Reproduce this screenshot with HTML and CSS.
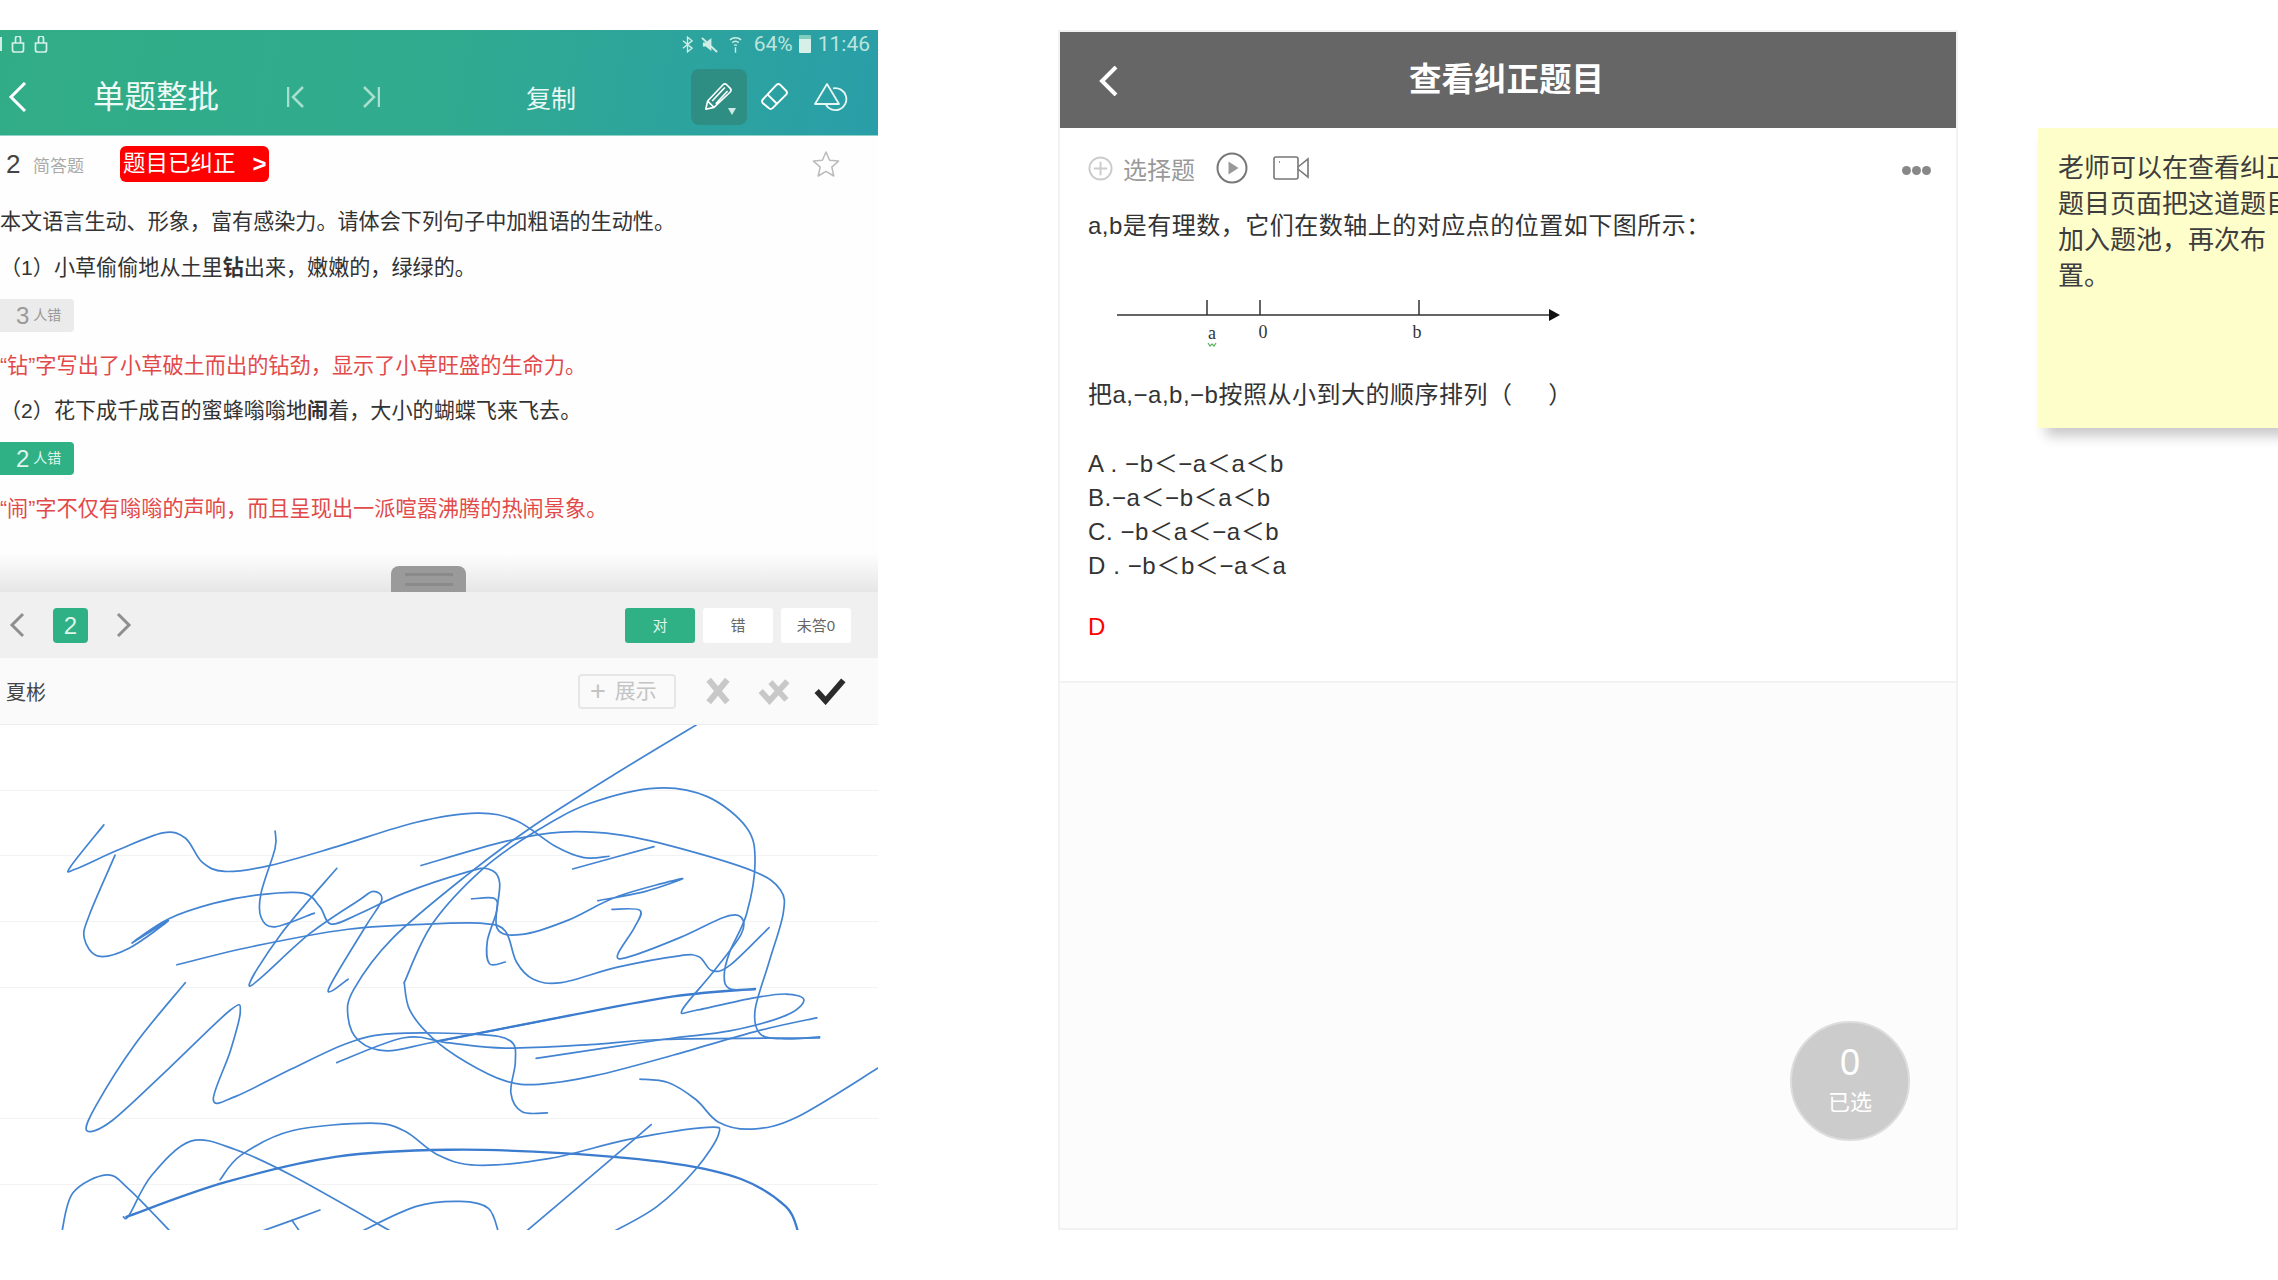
FILE: index.html
```html
<!DOCTYPE html>
<html lang="zh-CN">
<head>
<meta charset="utf-8">
<title>查看纠正题目</title>
<link rel="stylesheet" href="styles.css">
</head>
<body>
<main class="page">
  <section class="phone">
    <header class="app-head">
      <div class="status">
        <div class="status-left">
          <span class="st-bar"></span>
          <svg class="st-lock" viewBox="0 0 14 17"><path d="M1.500 7h11v7a2 2 0 0 1-2 2h-7a2 2 0 0 1-2-2zM4.500 7V2.500a2.500 2.500 0 0 1 5 0V7"/></svg>
          <svg class="st-lock" viewBox="0 0 14 17"><path d="M1.500 7h11v7a2 2 0 0 1-2 2h-7a2 2 0 0 1-2-2zM4.500 7V2.500a2.500 2.500 0 0 1 5 0V7"/></svg>
        </div>
        <div class="status-right">
          <svg class="st-bt" viewBox="0 0 12 18"><path d="M1 5l10 8-5 4V1l5 4-10 8"/></svg>
          <svg class="st-mute" viewBox="0 0 18 18"><path d="M2 7h3l6-5v14l-6-5H2z" class="fill"/><path d="M1 2l16 15"/></svg>
          <svg class="st-wifi" viewBox="0 0 14 20"><path d="M1 5a9 9 0 0 1 12 0M3.500 8a5.500 5.500 0 0 1 7 0M5.500 11a2.500 2.500 0 0 1 3 0M7 13v6"/></svg>
          <span class="st-pct">64%</span>
          <span class="st-bat"></span>
          <span class="st-time">11:46</span>
        </div>
      </div>
      <div class="toolbar">
        <svg class="tb-back" viewBox="0 0 19 30"><path d="M17 1L3 15l14 14"/></svg>
        <h1 class="tb-title">单题整批</h1>
        <svg class="tb-first" viewBox="0 0 18 24"><path d="M1 2v20M16 2L6 12l10 10"/></svg>
        <svg class="tb-last" viewBox="0 0 18 24"><path d="M17 2v20M2 2l10 10L2 22"/></svg>
        <span class="tb-copy">复制</span>
        <span class="tb-active">
          <svg class="tb-pen" viewBox="0 0 32 32"><path d="M2 30l2-9L21 3a3 3 0 0 1 4 0l4 4a3 3 0 0 1 0 4L11 28zM4 21l7 7M9 21L23 6M13 24L26 10"/></svg>
          <span class="tb-caret"></span>
        </span>
        <svg class="tb-eraser" viewBox="0 0 30 30"><path d="M3 18L17 3a3 3 0 0 1 4 0l6 6a3 3 0 0 1 0 4L13 27a3 3 0 0 1-4 0l-6-5a3 3 0 0 1 0-4zM8 13l10 10"/></svg>
        <svg class="tb-shape" viewBox="0 0 34 30"><path d="M13 2L25 22H1z"/><path d="M19 6.400A11 11 0 1 1 11.500 22"/></svg>
      </div>
    </header>

    <div class="question">
      <div class="meta">
        <span class="meta-no">2</span>
        <span class="meta-type">简答题</span>
        <span class="fixed-tag">题目已纠正<i class="fixed-arrow">&gt;</i></span>
        <svg class="star" viewBox="0 0 28 28"><path d="M14 2l3.600 8.300 8.900.8-6.700 6 2 8.900L14 21.300 6.200 26l2-8.900-6.700-6 8.900-.8z"/></svg>
      </div>
      <p class="q-line q-first">本文语言生动、形象，富有感染力。请体会下列句子中加粗语的生动性。</p>
      <p class="q-line">（1）小草偷偷地从土里<b>钻</b>出来，嫩嫩的，绿绿的。</p>
      <span class="pill pill-grey"><em>3</em>人错</span>
      <p class="q-line q-red">“钻”字写出了小草破土而出的钻劲，显示了小草旺盛的生命力。</p>
      <p class="q-line q-first">（2）花下成千成百的蜜蜂嗡嗡地<b>闹</b>着，大小的蝴蝶飞来飞去。</p>
      <span class="pill pill-green pill-second"><em>2</em>人错</span>
      <p class="q-line q-red">“闹”字不仅有嗡嗡的声响，而且呈现出一派喧嚣沸腾的热闹景象。</p>
    </div>

    <div class="handle-band"><div class="handle"><span></span><span></span></div></div>

    <div class="pager">
      <svg class="pg-chev pg-prev" viewBox="0 0 18 26"><path d="M15 2L4 13l11 11"/></svg>
      <span class="pg-no">2</span>
      <svg class="pg-chev pg-next" viewBox="0 0 18 26"><path d="M3 2l11 11L3 24"/></svg>
      <div class="pg-btns">
        <span class="pg-btn pg-on">对</span>
        <span class="pg-btn">错</span>
        <span class="pg-btn">未答0</span>
      </div>
    </div>

    <div class="student">
      <span class="st-name">夏彬</span>
      <span class="st-show"><i>+</i>展示</span>
      <svg class="mark mark-first" viewBox="0 0 30 30"><path class="mark-grey" d="M5 3l20 24M25 3L5 27"/></svg>
      <svg class="mark" viewBox="0 0 36 30"><path class="mark-grey" d="M3 15l10 11L33 4M14 5l18 20"/></svg>
      <svg class="mark" viewBox="0 0 36 30"><path class="mark-dark" d="M3 15l10 11L33 3"/></svg>
    </div>

    <div class="paper">
      <svg id="ink" class="ink" viewBox="0 72 1564 1466" preserveAspectRatio="none"></svg>
    </div>
  </section>

  <section class="panel">
    <header class="panel-head">
      <svg class="ph-back" viewBox="0 0 20 30"><path d="M18 1L4 15l14 14"/></svg>
      <h2 class="ph-title">查看纠正题目</h2>
    </header>
    <div class="panel-body">
      <div class="tools">
        <svg class="t-plus" viewBox="0 0 26 26"><circle cx="13" cy="13" r="11.500"/><path d="M13 6v14M6 13h14"/></svg>
        <span class="t-type">选择题</span>
        <svg class="t-play" viewBox="0 0 32 32"><circle cx="16" cy="16" r="14.500"/><path class="t-fill" d="M12.500 9.500l10 6.500-10 6.500z"/></svg>
        <svg class="t-cam" viewBox="0 0 37 26"><rect x="1" y="2" width="24" height="22" rx="2"/><path d="M25 12l10-8v18l-10-8M6 7h1"/></svg>
        <span class="t-dots"><i></i><i></i><i></i></span>
      </div>
      <p class="stem stem-first">a,b是有理数，它们在数轴上的对应点的位置如下图所示：</p>
      <svg class="axis" viewBox="0 0 480 135">
        <path class="axis-line" d="M29 72H462M119 57v15M172 57v15M331 57v15"/>
        <path class="axis-head" d="M461 66l11 6-11 6z"/>
        <text class="axis-label" x="124" y="96" text-anchor="middle">a</text>
        <text class="axis-label" x="175" y="95" text-anchor="middle">0</text>
        <text class="axis-label" x="329" y="95" text-anchor="middle">b</text>
        <path class="axis-wave" d="M120 100l2 3 2-2 2 2 2-3"/>
      </svg>
      <p class="stem">把a,−a,b,−b按照从小到大的顺序排列（&nbsp;&nbsp;&nbsp;&nbsp;&nbsp;）</p>
      <ul class="options">
        <li>A . −b＜−a＜a＜b</li>
        <li>B.−a＜−b＜a＜b</li>
        <li>C. −b＜a＜−a＜b</li>
        <li>D . −b＜b＜−a＜a</li>
      </ul>
      <p class="answer">D</p>
    </div>
    <div class="panel-rest">
      <div class="chosen"><span class="chosen-no">0</span><span class="chosen-label">已选</span></div>
    </div>
  </section>

  <aside class="note">老师可以在查看纠正<br>题目页面把这道题目<br>加入题池，再次布<br>置。</aside>
</main>
<script src="app.js"></script>
</body>
</html>
```

FILE: styles.css
```css
* { box-sizing: border-box; }
html, body { margin: 0; height: 100%; background: #fff; overflow: hidden; }
body { font-family: "Liberation Sans", "Noto Sans CJK SC", sans-serif; color: #333; }
h1, h2, p, ul { margin: 0; padding: 0; font-weight: 400; }
ul { list-style: none; }
svg { display: block; flex: none; fill: none; }
i, em { font-style: normal; }

.page { display: flex; align-items: flex-start; padding-top: 30px; width: 2278px; }

/* left phone */
.phone { width: 878px; height: 1200px; flex: none; display: flex; flex-direction: column; overflow: hidden; background: #fff; }
.app-head { height: 106px; flex: none; background: linear-gradient(100deg, #31ad86 0%, #30ab8f 50%, #2ca39f 80%, #2a9ea8 100%); border-bottom: 1px solid #8fd3c9; color: #fff; }
.status { height: 28px; display: flex; justify-content: space-between; align-items: center; padding: 0 8px 0 0; }
.status-left { display: flex; align-items: center; gap: 9px; }
.st-bar { width: 2px; height: 14px; background: #cfeee6; }
.st-lock { width: 14px; height: 17px; stroke: #d6f1ea; stroke-width: 1.700; }
.status-right { display: flex; align-items: center; color: #bde5dd; font-family: Roboto, "Liberation Sans", sans-serif; font-size: 21px; }
.st-bt { width: 11px; height: 17px; stroke: #cfeee6; stroke-width: 1.500; }
.st-mute { width: 17px; height: 17px; margin-left: 8px; stroke: #cfeee6; stroke-width: 2; }
.st-mute .fill { fill: #cfeee6; stroke: none; }
.st-wifi { width: 13px; height: 19px; margin-left: 11px; stroke: #cfeee6; stroke-width: 1.500; }
.st-pct { margin-left: 12px; }
.st-bat { width: 12px; height: 18px; margin-left: 6px; background: linear-gradient(#7fcdbf 22%, #d6efe9 22%); border-radius: 1px; }
.st-time { margin-left: 7px; }

.toolbar { height: 77px; display: flex; align-items: center; }
.tb-back { width: 19px; height: 30px; margin-left: 8px; stroke: #fff; stroke-width: 3; }
.tb-title { margin-left: 66px; font-size: 31.500px; line-height: 40px; color: #eefaf6; width: 126px; white-space: nowrap; }
.tb-first, .tb-last { width: 18px; height: 24px; stroke: #a9dfcf; stroke-width: 2.500; }
.tb-first { margin-left: 68px; }
.tb-last { margin-left: 57px; }
.tb-copy { margin-left: 146px; font-size: 25px; width: 50px; color: #eaf8f4; white-space: nowrap; }
.tb-active { margin-left: 115px; width: 56px; height: 56px; border-radius: 8px; background: #2f8e83; position: relative; display: flex; align-items: center; justify-content: center; }
.tb-pen { width: 29px; height: 29px; stroke: #fff; stroke-width: 1.800; margin: 0 0 0 -1px; stroke-linejoin: round; }
.tb-caret { position: absolute; left: 37px; top: 39px; border: 4px solid transparent; border-top: 7px solid #cfe9e4; border-bottom: 0; }
.tb-eraser { width: 29px; height: 29px; margin-left: 13px; stroke: #fff; stroke-width: 2; stroke-linejoin: round; }
.tb-shape { width: 34px; height: 30px; margin-left: 25px; stroke: #e8f6f4; stroke-width: 1.800; stroke-linejoin: round; }

.question { height: 417px; flex: none; background: #fefefe; display: flex; flex-direction: column; align-items: flex-start; }
.meta { height: 64px; width: 100%; display: flex; align-items: center; padding-bottom: 8px; flex: none; }
.meta-no { margin-left: 6px; font-size: 26px; width: 15px; color: #444; }
.meta-type { margin-left: 12px; font-size: 17px; color: #aaa; width: 52px; white-space: nowrap; }
.fixed-tag { margin-left: 35px; width: 149px; height: 36px; background: #f00; color: #fff; border-radius: 6px; font-size: 22.500px; line-height: 36px; padding-left: 3px; display: flex; white-space: nowrap; }
.fixed-arrow { margin-left: 17px; font-size: 24px; font-weight: 700; }
.star { width: 28px; height: 28px; margin-left: 543px; stroke: #bbb; stroke-width: 1.500; stroke-linejoin: round; }
.q-line { height: 45px; line-height: 45px; font-size: 21.100px; color: #333; white-space: nowrap; flex: none; }
.q-first { line-height: 43px; }
.q-line b { font-weight: 700; }
.q-red { color: #e24a4a; margin-top: 12px; font-size: 21.200px; line-height: 43px; }
.pill { margin-top: 9px; width: 74px; height: 33px; border-radius: 0 4px 4px 0; display: flex; align-items: center; padding-left: 16px; font-size: 14px; line-height: 33px; flex: none; }
.pill em { font-size: 24px; margin-right: 4px; }
.pill-grey { background: #ebebeb; color: #999; }
.pill-green { background: #30b185; color: #dff5ec; }
.pill-second { margin-top: 8px; }

.handle-band { height: 39px; flex: none; background: linear-gradient(#fefefe, #e6e6e6); display: flex; justify-content: center; align-items: flex-end; padding-right: 21px; }
.handle { width: 75px; height: 26px; background: #9a9a9a; border-radius: 8px 8px 0 0; display: flex; flex-direction: column; align-items: center; justify-content: center; gap: 7px; padding-top: 1px; }
.handle span { width: 48px; height: 3px; background: #8a8a8a; }

.pager { height: 66px; flex: none; background: #f0f0f0; display: flex; align-items: center; }
.pg-chev { width: 18px; height: 26px; stroke: #8f8f8f; stroke-width: 3; }
.pg-prev { margin-left: 8px; }
.pg-no { margin-left: 27px; width: 35px; height: 35px; border-radius: 4px; background: #30b185; color: #dff5ec; font-size: 24px; line-height: 35px; text-align: center; }
.pg-next { margin-left: 27px; }
.pg-btns { margin-left: auto; margin-right: 27px; display: flex; gap: 8px; }
.pg-btn { width: 70px; height: 35px; background: #fff; border-radius: 3px; font-size: 15px; line-height: 35px; text-align: center; color: #666; }
.pg-on { background: #30b185; color: #dff5ec; }

.student { height: 67px; flex: none; background: #fafafa; border-bottom: 1px solid #eee; display: flex; align-items: center; }
.st-name { margin-left: 6px; font-size: 20px; color: #444; width: 41px; white-space: nowrap; }
.st-show { margin-left: 531px; width: 98px; height: 35px; border: 2px solid #e6e6e6; border-radius: 4px; font-size: 21px; line-height: 30px; color: #c4c4c4; padding-left: 10px; display: flex; white-space: nowrap; }
.st-show i { font-size: 27px; margin-right: 9px; }
.mark { width: 32px; height: 28px; margin-left: 24px; }
.mark-first { margin-left: 26px; }
.mark-grey { stroke: #c8c8c8; stroke-width: 6.500; }
.mark-dark { stroke: #2b2b2b; stroke-width: 6.500; }

.paper { flex: 1; min-height: 0; background: repeating-linear-gradient(#fff 0, #fff 64.700px, #f3f3f3 64.700px, #f3f3f3 65.700px); }
.ink { width: 100%; height: 100%; }
.ink path { fill: none; stroke: #4384d2; stroke-width: 1.700; stroke-linecap: round; stroke-linejoin: round; vector-effect: non-scaling-stroke; }
.ink path.heavy { stroke: #3b7cce; stroke-width: 2.300; }

/* right panel */
.panel { margin-left: 180px; width: 900px; height: 1200px; flex: none; border: 2px solid #f2f2f2; display: flex; flex-direction: column; }
.panel-head { height: 96px; flex: none; background: #666; position: relative; display: flex; align-items: center; justify-content: center; }
.ph-back { position: absolute; left: 38px; top: 34px; width: 20px; height: 30px; stroke: #fff; stroke-width: 4; }
.ph-title { font-size: 32.500px; font-weight: 700; color: #fff; line-height: 40px; margin-left: -3px; }
.panel-body { padding: 12px 25px 37px 28px; border-bottom: 2px solid #f2f2f2; flex: none; height: 555px; font-size: 24px; }
.tools { height: 56px; display: flex; align-items: center; }
.t-plus { width: 25px; height: 25px; stroke: #ccc; stroke-width: 2; }
.t-type { margin-left: 10px; color: #999; font-size: 24px; width: 73px; white-space: nowrap; }
.t-play { width: 32px; height: 32px; margin-left: 20px; stroke: #777; stroke-width: 2; }
.t-fill { fill: #999; stroke: none; }
.t-cam { width: 37px; height: 26px; margin-left: 25px; stroke: #777; stroke-width: 1.600; }
.t-dots { margin-left: auto; display: flex; gap: 1px; margin-top: 4px; }
.t-dots i { width: 9px; height: 9px; border-radius: 50%; background: #888; }
.stem { height: 34px; line-height: 34px; white-space: nowrap; color: #333; letter-spacing: .5px; }
.stem-first { margin-top: 13px; }
.axis { width: 480px; height: 135px; }
.axis-line { stroke: #333; stroke-width: 1.500; }
.axis-head { fill: #111; }
.axis-label { font-family: "Liberation Serif", serif; font-size: 18px; fill: #333; }
.axis-wave { stroke: #5bb05b; stroke-width: 1.200; }
.options { margin-top: 35px; }
.options li { height: 34px; line-height: 34px; white-space: nowrap; letter-spacing: .6px; }
.answer { margin-top: 27px; height: 34px; line-height: 34px; color: #f00; }
.panel-rest { flex: 1; min-height: 0; background: #fcfcfc; display: flex; justify-content: flex-end; align-items: flex-end; padding: 0 46px 87px 0; }
.chosen { width: 120px; height: 120px; border-radius: 50%; background: #ccc; border: 2px solid #ddd; display: flex; flex-direction: column; align-items: center; color: #fff; padding-top: 19px; }
.chosen-no { font-size: 36px; line-height: 42px; }
.chosen-label { font-size: 22px; line-height: 30px; margin-top: 4px; }

/* sticky note */
.note { margin-left: 80px; margin-top: 98px; width: 300px; height: 300px; flex: none; background: #fefecb; padding: 20px 0 0 20px; font-size: 26px; line-height: 36px; color: #3d3d3d; white-space: nowrap; box-shadow: 6px 10px 12px -2px rgba(0, 0, 0, .22); font-family: "Noto Sans CJK SC", sans-serif; }
```

FILE: app.js
```js
var strokes = [
  {p:[1240,72,1100,210,950,365,830,510,700,690,630,840,620,920,640,990,690,1018,780,990,1000,920]},
  {p:[780,990,1000,920,1200,860,1345,838],h:1},
  {p:[720,820,770,650,860,490,950,385,1050,300,1170,255,1260,280,1330,370,1345,470,1330,620,1300,730,1290,800,1300,838,1345,840]},
  {p:[720,820,730,900,770,980,830,1050,900,1105,960,1115,1060,1090,1200,1030,1350,960,1455,922]},
  {p:[185,362,125,485,135,490,210,435,290,385,330,400,360,470,400,497,480,480,600,425,740,355,850,328,920,350,990,425,1040,457,1085,453]},
  {p:[1020,490,1165,425]},
  {p:[205,450,160,620,150,690,175,743,230,720,300,640,235,705,300,635,380,590,460,565,540,560,570,600,590,650,640,620,720,560,830,500,870,490,890,530,885,660,930,680,1010,640,1100,570,1215,518,1150,555,1065,582]},
  {p:[490,380,490,430,465,560,465,630,490,658,560,618]},
  {p:[600,488,500,680,445,830,550,680,640,580,665,555,680,580,650,660,585,840,620,810]},
  {p:[750,480,900,410,1000,383,1100,390,1200,425,1340,495,1390,550,1395,620,1370,760,1345,900,1355,970,1400,983,1460,977]},
  {p:[315,768,450,715,620,665,760,650,860,648,900,670,920,760,950,810,1000,820,1100,775,1210,742,1245,745,1268,785,1300,770,1370,660]},
  {p:[840,577,880,575,885,610,868,700,872,765,900,760]},
  {p:[1090,607,1140,610,1130,660,1100,740,1120,745,1210,690,1290,630,1320,630,1320,680,1270,790,1215,900,1240,900,1340,865,1400,853,1432,870,1400,915,1300,960,1180,985,955,1040]},
  {p:[330,820,240,1000,170,1180,155,1250,200,1220,300,1070,410,900,428,905,410,1020,380,1160,420,1150,520,1070,620,995,700,968,850,970,910,990,918,1050,910,1140,930,1195,975,1198]},
  {p:[600,1052,720,980,800,995,900,1010,1050,1000,1180,985,1460,980]},
  {p:[1140,1100,1190,1110,1240,1160,1280,1225,1340,1245,1420,1210,1564,1068]},
  {p:[110,1545,130,1430,190,1378,230,1420,305,1545]},
  {p:[220,1500,230,1495,270,1380,340,1280,420,1305,520,1380,700,1545]},
  {p:[225,1500,400,1400,600,1325,800,1305,1000,1315,1200,1345,1320,1390,1400,1470,1422,1545],h:1},
  {p:[392,1392,430,1320,520,1250,660,1228,720,1250,780,1320,850,1350,980,1330,1120,1275,1260,1240,1280,1260,1240,1360,1170,1470,1090,1545]},
  {p:[1160,1232,1040,1400,935,1545]},
  {p:[640,1545,740,1470,820,1455,870,1475,888,1545]},
  {p:[460,1545,520,1510,570,1480]},
  {p:[520,1510,535,1545]}
];

function smooth(p) {
  var d = "M" + p[0] + " " + p[1];
  var n = p.length / 2;
  function px(i) { i = Math.max(0, Math.min(n - 1, i)); return p[i * 2]; }
  function py(i) { i = Math.max(0, Math.min(n - 1, i)); return p[i * 2 + 1]; }
  for (var i = 0; i < n - 1; i++) {
    var c1x = px(i) + (px(i + 1) - px(i - 1)) / 6;
    var c1y = py(i) + (py(i + 1) - py(i - 1)) / 6;
    var c2x = px(i + 1) - (px(i + 2) - px(i)) / 6;
    var c2y = py(i + 1) - (py(i + 2) - py(i)) / 6;
    d += "C" + c1x + " " + c1y + " " + c2x + " " + c2y + " " + px(i + 1) + " " + py(i + 1);
  }
  return d;
}

var svg = document.getElementById("ink");
strokes.forEach(function (s) {
  var path = document.createElementNS("http://www.w3.org/2000/svg", "path");
  path.setAttribute("d", smooth(s.p));
  if (s.h) path.setAttribute("class", "heavy");
  svg.appendChild(path);
});
```
